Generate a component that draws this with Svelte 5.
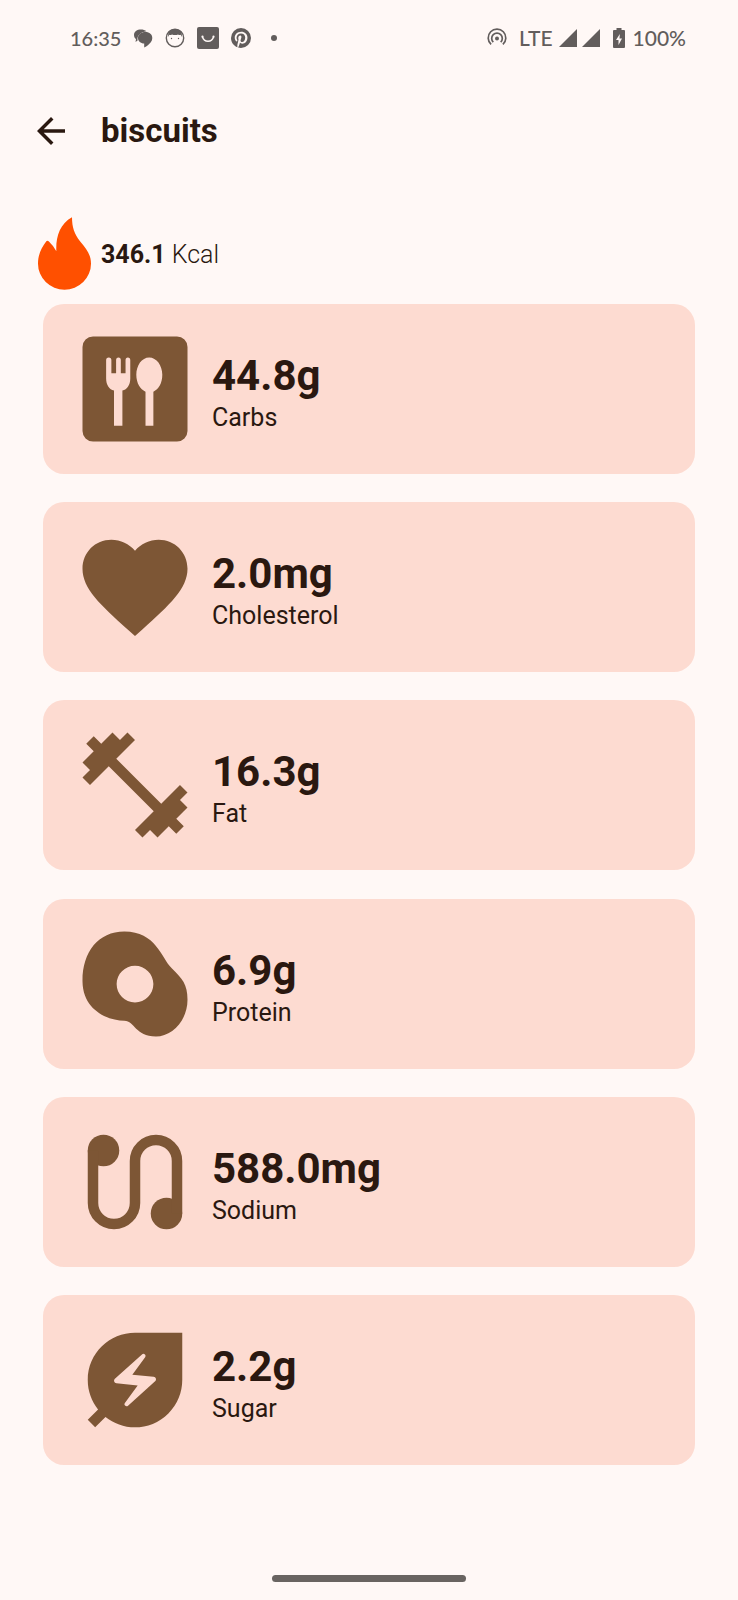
<script>
  const nutrients = [
    { icon: 'carbs', value: '44.8g', label: 'Carbs' },
    { icon: 'heart', value: '2.0mg', label: 'Cholesterol' },
    { icon: 'weights', value: '16.3g', label: 'Fat' },
    { icon: 'egg', value: '6.9g', label: 'Protein' },
    { icon: 'route', value: '588.0mg', label: 'Sodium' },
    { icon: 'leaf', value: '2.2g', label: 'Sugar' }
  ];

  const paths = {
    heart:
      'M12 21.35l-1.45-1.32C5.4 15.36 2 12.28 2 8.5 2 5.42 4.42 3 7.5 3c1.74 0 3.41.81 4.5 2.09C13.09 3.81 14.76 3 16.5 3 19.58 3 22 5.42 22 8.5c0 3.78-3.4 6.86-8.55 11.54L12 21.35z',
    weights:
      'M20.57 14.86L22 13.43 20.57 12 17 15.57 8.43 7 12 3.43 10.57 2 9.14 3.43 7.71 2 5.57 4.14 4.14 2.71 2.71 4.14l1.43 1.43L2 7.71l1.43 1.43L2 10.57 3.43 12 7 8.43 15.57 17 12 20.57 13.43 22l1.43-1.43L16.29 22l2.14-2.14 1.43 1.43 1.43-1.43-1.43-1.43L22 16.29z',
    egg: 'M19 9c-2-2-3.01-7-9.03-7C4.95 2 1.94 6 2 11.52 2.06 17.04 6.96 19 9.97 19c2.01 0 2.01 3 6.02 3C19 22 22 19 22 15.02 22 12 21.01 11 19 9zm-7 6.5c-1.93 0-3.5-1.57-3.5-3.5s1.57-3.5 3.5-3.5 3.5 1.57 3.5 3.5-1.57 3.5-3.5 3.5z',
    leaf: 'M12 3c-4.8 0-9 3.86-9 9 0 2.12.74 4.07 1.97 5.61L3 19.59 4.41 21l1.97-1.97C7.93 20.26 9.88 21 12 21c2.3 0 4.61-.88 6.36-2.64C20.12 16.61 21 14.3 21 12V3h-9zm3.83 9.26-5.16 4.63c-.16.15-.41.14-.56-.01-.14-.14-.16-.36-.04-.52l2.44-3.33-4.05-.4a.5.5 0 0 1-.29-.87l5.16-4.63c.16-.15.41-.14.56.01.14.14.16.36.04.52l-2.44 3.33 4.05.4c.45.04.63.59.29.86z'
  };
</script>

<div class="screen">
  <div class="status">
    <div class="side left">
      <span class="time">16:35</span>
      <svg width="20" height="20" viewBox="0 0 20 20" aria-hidden="true">
        <path class="fill" d="M8 1.500C4 1.500 1 3.500 1 7c0 1.800.8 3.200 2 4.200L2.500 14 4.600 12.500C3.800 7.500 7.500 4 13.500 3.300 12 2 10 1.500 8 1.500z" />
        <path class="fill" d="M12.500 4C8 4 5 6.500 5 10c0 3.200 2.700 5.400 6.200 5.600V19.500c2.800-1.400 4.800-3 6.600-5.300C18.800 12.900 19.300 11.500 19.300 10c0-3.500-2.800-6-6.800-6z" />
      </svg>
      <svg width="20" height="20" viewBox="0 0 20 20" aria-hidden="true">
        <circle class="line" cx="10" cy="10" r="8.700" stroke-width="1.400" />
        <path class="fill" d="M3 9C3 5 4 3 5 2.500q5-2.500 10 0C16 3 17 5 17 9l-1.300-2.200c-1 .4-1.700.2-2.700-.4-1.300.8-4.300.8-6 0-1 .6-1.700.8-2.700.4z" />
        <circle class="fill" cx="6.500" cy="10.500" r=".7" /><circle class="fill" cx="13.500" cy="10.500" r=".7" />
      </svg>
      <svg width="22" height="22" viewBox="0 0 22 22" aria-hidden="true">
        <rect class="fill" width="22" height="22" rx="2" />
        <path d="M5.500 10a5.700 5.700 0 0 0 11 0" fill="none" stroke="#fff8f6" stroke-width="1.400" stroke-linecap="round" />
        <circle cx="5.500" cy="9.700" r="1.100" fill="#fff8f6" /><circle cx="16.500" cy="9.700" r="1.100" fill="#fff8f6" />
      </svg>
      <svg width="20" height="20" viewBox="2 2 20 20" aria-hidden="true">
        <path class="fill" d="M9.040 21.540c.960.290 1.930.460 2.960.460a10 10 0 0 0 10-10A10 10 0 0 0 12 2 10 10 0 0 0 2 12c0 4.250 2.670 7.900 6.440 9.340-.090-.780-.180-2.070 0-2.960l1.150-4.940s-.290-.580-.290-1.500c0-1.380.860-2.410 1.840-2.410.860 0 1.260.630 1.260 1.440 0 .860-.570 2.090-.860 3.270-.170.980.520 1.840 1.520 1.840 1.780 0 3.160-1.900 3.160-4.580 0-2.400-1.720-4.040-4.190-4.040-2.820 0-4.480 2.100-4.480 4.310 0 .860.280 1.730.740 2.300.090.060.090.140.060.290l-.290 1.090c0 .170-.110.230-.280.110-1.280-.560-2.020-2.380-2.020-3.850 0-3.160 2.240-6.030 6.560-6.030 3.440 0 6.120 2.470 6.120 5.750 0 3.440-2.130 6.200-5.180 6.200-.970 0-1.920-.520-2.260-1.130l-.670 2.370c-.230.860-.860 2.010-1.290 2.700z" />
      </svg>
      <span class="dot"></span>
    </div>
    <div class="side right">
      <svg class="cast" width="20" height="20" viewBox="0 0 20 20" aria-hidden="true">
        <path class="line" d="M4.100 16.400a8.800 8.800 0 1 1 11.800 0M6.300 14.200a5.300 5.300 0 1 1 7.400 0" stroke-width="1.700" />
        <circle class="fill" cx="10" cy="10.500" r="2" />
      </svg>
      <span>LTE</span>
      <svg class="signal" width="42" height="18" viewBox="0 0 42 18" aria-hidden="true">
        <path class="fill" d="M0 18 18 0v18zM23 18 41 0v18z" />
      </svg>
      <svg class="battery" width="12" height="20" viewBox="0 0 12 20" aria-hidden="true">
        <path class="fill" d="M3.500 0h5v2H11a1 1 0 0 1 1 1v16a1 1 0 0 1-1 1H1a1 1 0 0 1-1-1V3a1 1 0 0 1 1-1h2.500z" />
        <path d="M6.800 6 3 12h2.500v5L9 10.500H6.500z" fill="#fff8f6" />
      </svg>
      <span>100%</span>
    </div>
  </div>

  <header>
    <button aria-label="Back">
      <svg width="42" height="42" viewBox="0 0 24 24" aria-hidden="true">
        <path d="M20 11H7.830l5.590-5.590L12 4l-8 8 8 8 1.410-1.410L7.830 13H20z" fill="currentColor" />
      </svg>
    </button>
    <h1>biscuits</h1>
  </header>

  <main>
    <p class="energy">
      <svg width="53" height="73" viewBox="54 38 159 217" aria-hidden="true">
        <path fill="#ff5000" d="M156 38C156 68 163 88 180 110 202 136 213 152 213 177A79.500 78 0 0 1 54 177C54 150 64 130 79 110Q82 106 86 110 101 124 109 140C107 98 119 58 156 38z" />
      </svg>
      <span class="amount"><strong>346.1</strong> Kcal</span>
    </p>

    <ul>
      {#each nutrients as item (item.label)}
        <li>
          <svg width="126" height="126" viewBox="0 0 24 24" fill="currentColor" aria-hidden="true">
            {#if item.icon === 'carbs'}
              <path
                fill-rule="evenodd"
                d="M4 2h16a2 2 0 0 1 2 2v16a2 2 0 0 1-2 2H4a2 2 0 0 1-2-2V4a2 2 0 0 1 2-2zM6.500 6.500V10C6.500 11.200 7.100 12.100 8 12.300V19h1.600v-6.700C10.500 12.100 11.100 11.200 11.100 10V6.500a.45.5 0 0 0-.9 0V9h-.9V6.500a.45.5 0 0 0-.9 0V9h-.9V6.500a.5.5 0 0 0-1 0zM14.700 6C13.300 6 12.250 7.500 12.250 9.300c0 1.600.75 2.800 1.750 3.200V19h1.500v-6.500c1-.4 1.700-1.600 1.700-3.200C17.200 7.500 16.100 6 14.700 6z"
              />
            {:else if item.icon === 'route'}
              <circle cx="6" cy="6" r="3" />
              <circle cx="18" cy="18" r="3" />
              <path d="M4 6v10a4 4 0 0 0 8 0V8a4 4 0 0 1 8 0v10" fill="none" stroke="currentColor" stroke-width="2" />
            {:else}
              <path d={paths[item.icon]} />
            {/if}
          </svg>
          <div class="facts">
            <strong>{item.value}</strong>
            <span>{item.label}</span>
          </div>
        </li>
      {/each}
    </ul>
  </main>

  <div class="nav"><span></span></div>
</div>

<style>
  :global(body) {
    margin: 0;
    background: #fff8f6;
  }
  .screen {
    box-sizing: border-box;
    min-height: 100vh;
    display: flex;
    flex-direction: column;
    background: #fff8f6;
    color: #2a1810;
    font-family: Roboto, sans-serif;
  }
  .status {
    height: 75px;
    padding: 0 52px 0 70px;
    display: flex;
    align-items: center;
    justify-content: space-between;
    color: #625d5c;
    font: 500 21px/24px Lato, sans-serif;
  }
  .side {
    display: flex;
    align-items: center;
  }
  .left {
    gap: 12px;
  }
  .time {
    font-size: 20px;
  }
  .fill {
    fill: #625d5c;
  }
  .line {
    fill: none;
    stroke: #625d5c;
  }
  .dot {
    width: 6px;
    height: 6px;
    margin-left: 8px;
    border-radius: 50%;
    background: #625d5c;
  }
  .cast {
    margin-right: 12px;
  }
  .signal {
    margin: 0 12px 0 6px;
  }
  .battery {
    margin-right: 8px;
  }
  header {
    height: 112px;
    padding: 0 30px;
    display: flex;
    align-items: center;
    gap: 29px;
  }
  button {
    display: flex;
    padding: 0;
    border: 0;
    background: none;
    color: inherit;
    cursor: pointer;
  }
  h1 {
    margin: 0;
    font-size: 33px;
    font-weight: 700;
    line-height: 44px;
  }
  main {
    flex: 1;
    display: flex;
    flex-direction: column;
    padding-top: 30px;
  }
  .energy {
    margin: 0 0 14px;
    padding: 0 38px;
    display: flex;
    align-items: center;
    gap: 10px;
    font-size: 25px;
    font-weight: 300;
    line-height: 36px;
  }
  .amount {
    padding-top: 2px;
  }
  strong {
    font-weight: 700;
  }
  ul {
    flex: 1;
    margin: 0;
    padding: 0 43px;
    display: flex;
    flex-direction: column;
    justify-content: space-between;
    list-style: none;
  }
  li {
    padding: 22px 29px;
    display: flex;
    align-items: center;
    gap: 14px;
    border-radius: 21px;
    background: #fddbd1;
  }
  li svg {
    flex: none;
    color: #7d5635;
  }
  .facts {
    display: flex;
    flex-direction: column;
    padding-top: 10px;
  }
  .facts strong {
    font-size: 42px;
    line-height: 48px;
  }
  .facts span {
    font-size: 25px;
    line-height: 36px;
  }
  .nav {
    height: 135px;
    display: flex;
    align-items: flex-end;
    justify-content: center;
  }
  .nav span {
    width: 194px;
    height: 7px;
    margin-bottom: 18px;
    border-radius: 4px;
    background: #696461;
  }
</style>
